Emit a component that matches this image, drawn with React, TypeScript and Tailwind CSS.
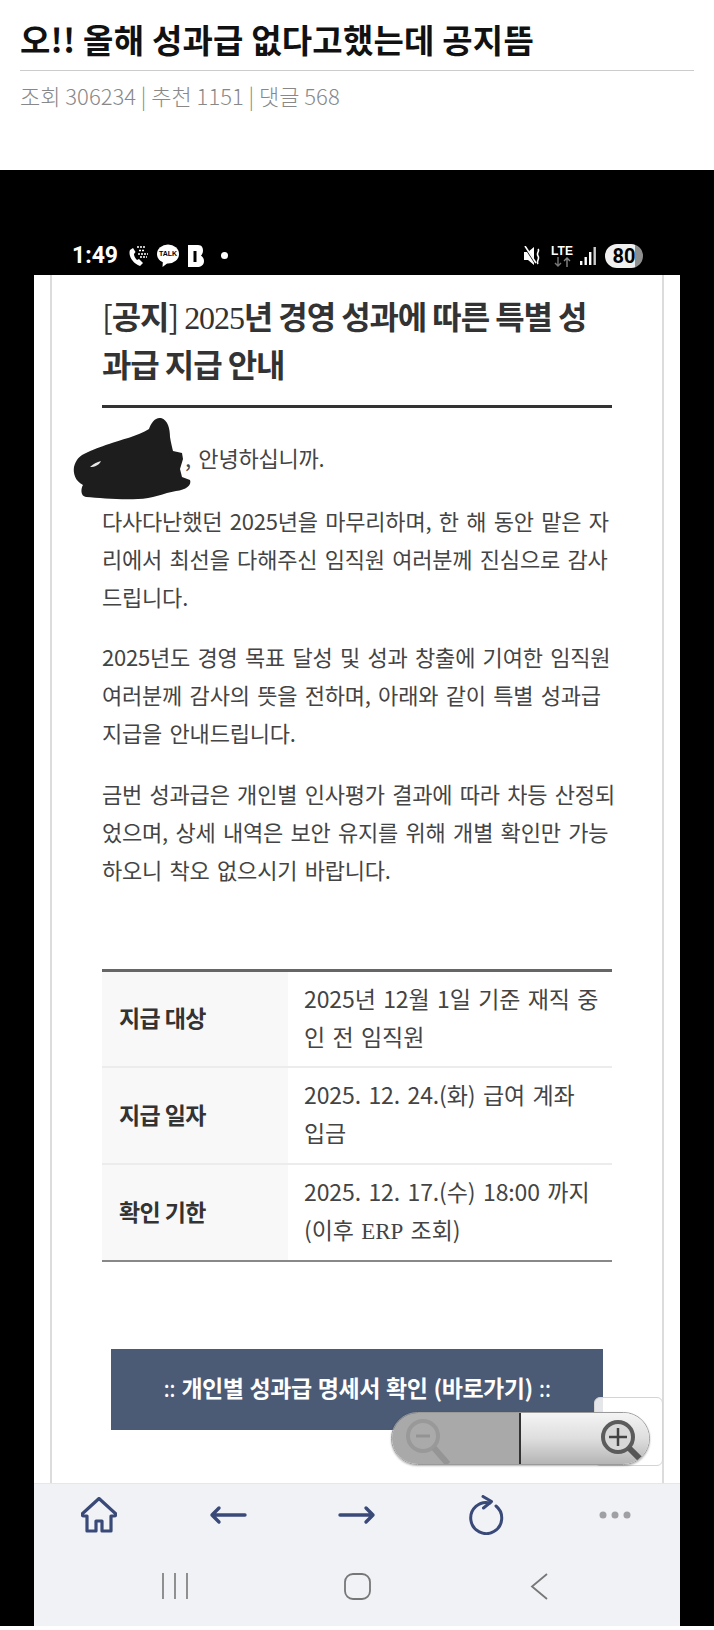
import { ReactNode } from "react";

const sans = "font-['Noto_Sans_CJK_KR',sans-serif]";
const serif = "font-['Liberation_Serif',serif]";

function WhoWho() {
  return (
    <div className="relative w-[22px] h-[24px]">
      <svg width="22" height="24" viewBox="0 0 22 24" className="absolute left-0 top-0">
        <path d="M2 6 C0 11 4 19 12 22 L15 19 L11 15 L9 16 C7 14 6 12 6 10 L7.5 8 L5 4 Z" fill="#fff" />
        <path d="M9 3 h8 M11 6.5 h6 M10 10 h10 M12 13 h7" stroke="#fff" strokeWidth="1.4" strokeDasharray="2 1" />
      </svg>
    </div>
  );
}

function TalkBubble() {
  return (
    <div className="relative w-[22px] h-[24px]">
      <svg width="22" height="24" viewBox="0 0 22 24" className="absolute left-0 top-0">
        <ellipse cx="11" cy="10" rx="11" ry="9.5" fill="#fff" />
        <path d="M6 16 L5.5 23 L12 18 Z" fill="#fff" />
      </svg>
      <span className="absolute left-0 top-[5px] w-[22px] text-center text-[7px] leading-[10px] font-bold text-black font-['Liberation_Sans',sans-serif]">
        TALK
      </span>
    </div>
  );
}

function BLogo() {
  return (
    <svg width="16" height="24" viewBox="0 0 16 24">
      <path d="M0 1 H10 C14 1 15 4 15 6.5 C15 9 14 10.5 13 11.5 C15 13 16 15 16 17 C16 21 13 23 9 23 H0 Z" fill="#fff" />
      <rect x="5.5" y="7" width="3" height="11" fill="#000" />
    </svg>
  );
}

function StatusBar() {
  return (
    <div className="h-[105px] flex items-end justify-between pl-[72px] pr-[71px] pb-[7px]">
      <div className="flex items-center h-[25px]">
        <span className="w-[56px] text-[23px] leading-[25px] font-bold text-white font-['Roboto',sans-serif]">1:49</span>
        <WhoWho />
        <div className="w-[7px]" />
        <TalkBubble />
        <div className="w-[9px]" />
        <BLogo />
        <div className="w-[17px]" />
        <div className="w-[7px] h-[7px] rounded-full bg-white" />
      </div>
      <div className="flex items-center h-[25px]">
        <svg width="18" height="20" viewBox="0 0 18 20" className="mr-[10px]">
          <path d="M0 6 H4 L10 1 V19 L4 14 H0 Z" fill="#fff" />
          <path d="M1 1 L12 18" stroke="#000" strokeWidth="2" />
          <path d="M1 0 L12 17" stroke="#fff" strokeWidth="1.6" />
          <path d="M14 3 C16 5 12 7 14 10 C16 13 12 15 14 18" stroke="#fff" strokeWidth="1.6" fill="none" />
        </svg>
        <div className="flex flex-col items-center w-[20px] mr-[8px]">
          <span className="text-[12px] leading-[12px] font-bold text-white font-['Liberation_Sans',sans-serif]">LTE</span>
          <svg width="17" height="10" viewBox="0 0 17 10">
            <path d="M4 0 V9 M1 6 L4 9 L7 6" stroke="#777" strokeWidth="1.4" fill="none" />
            <path d="M13 10 V1 M10 4 L13 1 L16 4" stroke="#888" strokeWidth="1.4" fill="none" />
          </svg>
        </div>
        <svg width="16" height="18" viewBox="0 0 16 18" className="mr-[9px]">
          <rect x="0" y="14" width="2.4" height="4" fill="#fff" />
          <rect x="4.5" y="10" width="2.4" height="8" fill="#fff" />
          <rect x="9" y="5" width="2.4" height="13" fill="#fff" />
          <rect x="13.5" y="0" width="2.4" height="18" fill="#ccc" />
        </svg>
        <div className="w-[38px] h-[24px] rounded-full bg-gradient-to-r from-[#f0f0f0] from-80% to-[#8f8f8f] to-80% flex items-center justify-center">
          <span className="text-[20px] leading-[24px] font-bold text-black font-['Roboto',sans-serif]">80</span>
        </div>
      </div>
    </div>
  );
}

function TableRow({ head, height, last, children }: { head: string; height: string; last?: boolean; children: ReactNode }) {
  return (
    <div className={`flex ${height} ${last ? "" : "border-b-2 border-[#ececec]"}`}>
      <div className="w-[186px] bg-[#f8f8f8] pl-[17px] pb-[3px] flex items-center text-[23px] font-bold text-[#333] tracking-[-0.6px]">
        {head}
      </div>
      <div className="flex-1 pl-[16px] pt-[7px] text-[23px] leading-[38px] text-[#444] tracking-[-0.1px] [word-spacing:2.4px] whitespace-nowrap">
        {children}
      </div>
    </div>
  );
}

function Article() {
  return (
    <div className={`mx-[16px] h-full border-x-2 border-[#dcdcdc] px-[50px] pt-[16px] ${sans}`}>
      <h2 className="text-[32px] leading-[48px] font-bold text-[#333] tracking-[-1.1px] whitespace-nowrap">
        <span className="font-normal">[</span>공지<span className="font-normal">] </span>
        <span className={`font-normal leading-[0] ${serif}`}>2025</span>년 경영 성과에 따른 특별 성
        <br />
        과급 지급 안내
      </h2>
      <div className="mt-[18px] h-[3px] bg-[#333]" />

      <div className="text-[#444] text-[22px] leading-[38px] tracking-[-0.2px] [word-spacing:2.7px] whitespace-nowrap">
        <p className="mt-[30px] pl-[83px]">, 안녕하십니까.</p>
        <p className="mt-[25px]">
          다사다난했던 2025년을 마무리하며, 한 해 동안 맡은 자
          <br />
          리에서 최선을 다해주신 임직원 여러분께 진심으로 감사
          <br />
          드립니다.
        </p>
        <p className="mt-[22px]">
          2025년도 경영 목표 달성 및 성과 창출에 기여한 임직원
          <br />
          여러분께 감사의 뜻을 전하며, 아래와 같이 특별 성과급
          <br />
          지급을 안내드립니다.
        </p>
        <p className="mt-[23px]">
          금번 성과급은 개인별 인사평가 결과에 따라 차등 산정되
          <br />
          었으며, 상세 내역은 보안 유지를 위해 개별 확인만 가능
          <br />
          하오니 착오 없으시기 바랍니다.
        </p>
      </div>

      <div className="mt-[81px] border-t-[3px] border-t-[#666] border-b-2 border-b-[#888]">
        <TableRow head="지급 대상" height="h-[96px]">
          2025년 12월 1일 기준 재직 중
          <br />인 전 임직원
        </TableRow>
        <TableRow head="지급 일자" height="h-[97px]">
          2025. 12. 24.(화) 급여 계좌
          <br />
          입금
        </TableRow>
        <TableRow head="확인 기한" height="h-[95px]" last>
          2025. 12. 17.(수) 18:00 까지
          <br />
          (이후 <span className={`leading-[0] ${serif}`}>ERP</span> 조회)
        </TableRow>
      </div>

      <div className="mt-[87px] mx-[9px] h-[81px] bg-[#4b5a75] flex justify-center pt-[19px] text-white text-[23px] leading-[38px] font-bold tracking-[-0.5px] [word-spacing:1.5px] whitespace-nowrap">
        <span className="font-normal">::&nbsp;</span>개인별 성과급 명세서 확인 (바로가기)<span className="font-normal">&nbsp;::</span>
      </div>
    </div>
  );
}

function Redaction() {
  return (
    <svg width="125" height="85" viewBox="0 0 125 85" className="absolute left-[36px] top-[140px]">
      <path
        d="M4 52 C6 44 10 41 14 39 C24 34 30 32 39 29 C50 25 68 21 79 14 C81 8 85 2 91 3 C98 5 100 14 100 22 C101 28 102 32 103 36 L112 38 L113 44 L110 54 L112 62 L120 65 C122 70 116 75 106 76 C94 78 82 84 68 84 C50 85 30 83 16 82 C10 81 11 73 13 70 C5 66 3 58 4 52 Z"
        fill="#1d1d1d"
      />
      <path d="M20 52 C23 49 27 47 31 46 C29 50 25 52 20 52 Z" fill="#e8e8e8" />
    </svg>
  );
}

function ZoomControl() {
  return (
    <>
      <div className="absolute left-[560px] top-[1122px] w-[69px] h-[69px] rounded-[6px] border border-[#d4d4d4] bg-white/85" />
      <div className="absolute left-[357px] top-[1137px] w-[259px] h-[53px] rounded-full overflow-hidden border border-[#9a9a9a] flex shadow-[0_1px_2px_rgba(0,0,0,0.3)]">
        <div className="w-[129px] bg-[#a9a9a9] border-r-2 border-[#333] flex items-center pl-[12px]">
          <svg width="48" height="50" viewBox="0 0 48 50">
            <circle cx="19" cy="22" r="15" fill="#aaa" stroke="#999" strokeWidth="4" />
            <path d="M12 22 H26" stroke="#939393" strokeWidth="3" />
            <path d="M30 34 L44 50" stroke="#959595" strokeWidth="6" />
          </svg>
        </div>
        <div className="flex-1 bg-gradient-to-b from-[#f4f4f4] via-[#dedede] to-[#b5b5b5] flex items-center justify-end pr-[6px]">
          <svg width="46" height="48" viewBox="0 0 46 48">
            <circle cx="21" cy="22" r="15" fill="#d8d8d8" stroke="#5b5b5b" strokeWidth="4" />
            <path d="M12 22 H30 M21 13 V31" stroke="#444" strokeWidth="2.5" />
            <path d="M32 33 L44 45" stroke="#555" strokeWidth="6" />
          </svg>
        </div>
      </div>
    </>
  );
}

function BrowserBar() {
  return (
    <div className="grid grid-cols-5 h-[64px] pb-[3px] items-center justify-items-center">
      <svg width="36" height="36" viewBox="0 0 36 36" fill="none" stroke="#3a4a78" strokeWidth="3.2" strokeLinejoin="round">
        <path d="M18 1.5 L35 17 Q35 19 33 19 H30 V34 H21 V24 H15 V34 H6 V19 H3 Q1 19 1 17 Z" />
      </svg>
      <svg width="38" height="20" viewBox="0 0 38 20" fill="none" stroke="#3a4a78" strokeWidth="3.4" strokeLinecap="round" strokeLinejoin="round">
        <path d="M36 10 H3 M10 3 L3 10 L10 17" />
      </svg>
      <svg width="38" height="20" viewBox="0 0 38 20" fill="none" stroke="#3a4a78" strokeWidth="3.4" strokeLinecap="round" strokeLinejoin="round">
        <path d="M2 10 H35 M28 3 L35 10 L28 17" />
      </svg>
      <svg width="36" height="40" viewBox="0 0 36 40" fill="none" stroke="#3a4a78" strokeWidth="3" strokeLinecap="round" strokeLinejoin="round">
        <path d="M22 8 A15.5 15.5 0 1 0 28 11" />
        <path d="M15 1.5 L23.5 6.5 L15.5 13" />
      </svg>
      <svg width="32" height="8" viewBox="0 0 32 8" fill="#a0a0a4">
        <circle cx="4" cy="4" r="3.5" />
        <circle cx="16" cy="4" r="3.5" />
        <circle cx="28" cy="4" r="3.5" />
      </svg>
    </div>
  );
}

function NavBar() {
  return (
    <div className="grid grid-cols-[182px_182px_182px] justify-center h-[78px] pb-[2px] items-center justify-items-center">
      <svg width="26" height="26" viewBox="0 0 26 26" stroke="#777" strokeWidth="1.6">
        <path d="M1 0 V26 M13 0 V26 M25 0 V26" />
      </svg>
      <svg width="27" height="27" viewBox="0 0 27 27" fill="none" stroke="#777" strokeWidth="1.8">
        <rect x="1" y="1" width="25" height="25" rx="8" />
      </svg>
      <svg width="18" height="27" viewBox="0 0 18 27" fill="none" stroke="#777" strokeWidth="1.8">
        <path d="M17 1 L2 13.5 L17 26" />
      </svg>
    </div>
  );
}

export default function App() {
  return (
    <div className={`w-[714px] h-[1630px] bg-white flex flex-col ${sans}`}>
      <header className="h-[170px] shrink-0 px-[20px] pt-[15px]">
        <h1 className="text-[33px] leading-[48px] font-bold text-[#111] tracking-[0.2px] whitespace-nowrap">
          오!! 올해 성과급 없다고했는데 공지뜸
        </h1>
        <div className="mt-[7px] h-[1px] bg-[#ccc]" />
        <div className="mt-[9px] text-[22px] leading-[30px] text-[#888] font-light">
          조회 306234 | 추천 1151 | 댓글 568
        </div>
      </header>

      <div className="bg-black h-[1456px] shrink-0 flex flex-col">
        <StatusBar />
        <div className="relative mx-[34px] w-[646px] h-[1351px] bg-white flex flex-col overflow-hidden">
          <div className="h-[1208px] shrink-0 overflow-hidden">
            <Article />
          </div>
          <div className="flex-1 bg-[#f1f2f6] border-t border-[#e6e7eb]">
            <BrowserBar />
            <NavBar />
          </div>
          <Redaction />
          <ZoomControl />
        </div>
      </div>
    </div>
  );
}
